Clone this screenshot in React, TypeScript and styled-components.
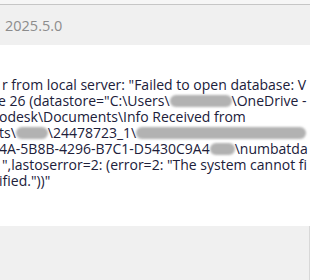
import React from "react";
import styled, { createGlobalStyle } from "styled-components";

const GlobalStyle = createGlobalStyle`
  html, body {
    margin: 0;
    padding: 0;
    background: #ffffff;
  }
  body {
    width: 310px;
    height: 280px;
    overflow: hidden;
  }
`;

const Dialog = styled.div`
  display: flex;
  flex-direction: column;
  width: 310px;
  height: 280px;
  font-family: "Open Sans", "Noto Sans", sans-serif;
  overflow: hidden;
`;

const TopEdge = styled.div`
  height: 4px;
  background: #f6f6f6;
  border-bottom: 1px solid #c6c6c6;
`;

const Header = styled.div`
  display: flex;
  align-items: center;
  height: 40px;
  padding-left: 5px;
  background: #f0f0f0;
  color: #8c8c8c;
  font-size: 14.5px;
`;

const Body = styled.div`
  flex: 1;
  padding-top: 32px;
  background: #ffffff;
  overflow: hidden;
`;

const Line = styled.div<{ $shift?: number }>`
  height: 16px;
  line-height: 16px;
  margin-left: ${({ $shift }) => $shift ?? 0}px;
  white-space: nowrap;
  font-size: 14px;
  color: #20203a;
`;

const Redact = styled.span<{ $w: number }>`
  display: inline-block;
  width: ${({ $w }) => $w}px;
  height: 12px;
  vertical-align: -1px;
  border-radius: 6px;
  background: #b2b2b2;
  filter: blur(1.2px);
`;

const Footer = styled.div`
  height: 54px;
  background: #f0f0f0;
  border-right: 1px solid #d8d8d8;
`;

export default function App() {
  return (
    <>
      <GlobalStyle />
      <Dialog>
        <TopEdge />
        <Header>2025.5.0</Header>
        <Body>
          <Line $shift={2}>r from local server: "Failed to open database: V</Line>
          <Line $shift={-2}>
            e 26 (datastore="C:\Users\<Redact $w={62} />\OneDrive -
          </Line>
          <Line $shift={-1}>odesk\Documents\Info Received from</Line>
          <Line $shift={-1}>
            ts\<Redact $w={32} />\24478723_1\<Redact $w={170} />
          </Line>
          <Line $shift={-1}>
            4A-5B8B-4296-B7C1-D5430C9A4<Redact $w={25} />\numbatda
          </Line>
          <Line $shift={2}>",lastoserror=2: (error=2: "The system cannot fi</Line>
          <Line $shift={-1}>ified."))"</Line>
        </Body>
        <Footer />
      </Dialog>
    </>
  );
}
